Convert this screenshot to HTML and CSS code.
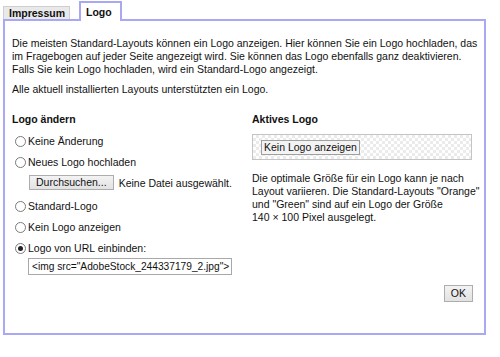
FILE: index.html
```html
<!DOCTYPE html>
<html lang="de">
<head>
  <meta charset="UTF-8">
  <title>Logo</title>
  <link rel="stylesheet" href="styles.css">
</head>
<body>
  <div class="dialog">
    <div class="tabs">
      <div class="tab">Impressum</div>
      <div class="tab active">Logo</div>
    </div>

    <div class="panel">
      <p class="intro">Die meisten Standard-Layouts können ein Logo anzeigen. Hier können Sie ein Logo hochladen, das<br>
        im Fragebogen auf jeder Seite angezeigt wird. Sie können das Logo ebenfalls ganz deaktivieren.<br>
        Falls Sie kein Logo hochladen, wird ein Standard-Logo angezeigt.</p>
      <p>Alle aktuell installierten Layouts unterstützten ein Logo.</p>

      <div class="cols">
        <div class="col-left">
          <h3>Logo ändern</h3>
          <label class="opt"><span class="radio"></span>Keine Änderung</label>
          <label class="opt"><span class="radio"></span>Neues Logo hochladen</label>
          <div class="file-row">
            <span class="btn">Durchsuchen...</span>
            <span>Keine Datei ausgewählt.</span>
          </div>
          <label class="opt"><span class="radio"></span>Standard-Logo</label>
          <label class="opt"><span class="radio"></span>Kein Logo anzeigen</label>
          <label class="opt"><span class="radio checked"></span>Logo von URL einbinden:</label>
          <div class="url-field">&lt;img src="AdobeStock_244337179_2.jpg"&gt;</div>
        </div>

        <div class="col-right">
          <h3>Aktives Logo</h3>
          <div class="preview">
            <span class="preview-btn">Kein Logo anzeigen</span>
          </div>
          <p class="hint">Die optimale Größe für ein Logo kann je nach Layout variieren. Die Standard-Layouts "Orange" und "Green" sind auf ein Logo der Größe <span class="nowrap">140 × 100 Pixel</span> ausgelegt.</p>
        </div>
      </div>

      <div class="actions">
        <span class="btn ok">OK</span>
      </div>
    </div>
  </div>
</body>
</html>
```

FILE: styles.css
```css
body {
  margin: 0;
  padding: 3px;
  font-family: "Liberation Sans", Arial, sans-serif;
  font-size: 10.5px;
  color: #111;
  background: #fff;
}

.dialog {
  width: 483px;
}

/* Reiter */
.tabs {
  display: flex;
  align-items: flex-end;
  gap: 9px;
  height: 16px;
  position: relative;
  z-index: 1;
}

.tab {
  font-weight: bold;
  padding: 0 6px 0 5px;
  height: 12px;
  line-height: 13px;
  width: 54px;
  background: #e9e9e9;
  border: 1px solid #cfcfcf;
  border-bottom: none;
}

.tab.active {
  width: auto;
  background: #fff;
  border: 2px solid #a8a8f4;
  border-bottom: none;
  height: 18px;
  line-height: 18px;
  padding: 0 8px 0 5px;
  margin-bottom: -2px;
}

.panel {
  border: 2px solid #a8a8f4;
  height: 316px;
  box-sizing: border-box;
  padding: 16px 8px 0 7px;
  display: flex;
  flex-direction: column;
}

.panel p {
  margin: 0 0 7px;
  line-height: 13px;
}

.panel .intro {
  white-space: nowrap;
}

.cols {
  display: flex;
  margin-top: 9px;
}

.col-left {
  width: 240px;
  flex-shrink: 0;
}

.col-right {
  width: 234px;
  flex-shrink: 0;
}

h3 {
  font-size: 10.5px;
  margin: 0 0 8px;
  line-height: 14px;
}

.opt {
  display: flex;
  align-items: center;
  height: 14px;
  margin-bottom: 7px;
}

.radio {
  width: 11px;
  height: 11px;
  border: 1px solid #7a7a7a;
  border-radius: 50%;
  margin: 0 2px 0 3px;
  box-sizing: border-box;
  background: #fff;
  position: relative;
}

.radio.checked::after {
  content: "";
  position: absolute;
  left: 2px;
  top: 2px;
  width: 5px;
  height: 5px;
  border-radius: 50%;
  background: #222;
}

.file-row {
  display: flex;
  align-items: center;
  gap: 5px;
  margin: -1px 0 9px 17px;
}

.btn {
  display: inline-block;
  border: 1px solid #adadad;
  background: linear-gradient(#f3f3f3, #e2e2e2);
  padding: 0 6px;
  height: 13px;
  line-height: 13px;
}

.url-field {
  margin: -4px 0 0 16px;
  width: 204px;
  height: 17px;
  box-sizing: border-box;
  border: 1px solid #a8a8a8;
  padding: 0 3px;
  font-size: 10.2px;
  line-height: 15px;
  white-space: nowrap;
  background: #fff;
}

.preview {
  width: 220px;
  box-sizing: border-box;
  border: 1px solid #c4c4c4;
  height: 26px;
  display: flex;
  align-items: center;
  padding-left: 8px;
  margin: 2px 0 12px;
  background: repeating-conic-gradient(#ebebeb 0 25%, #fff 0 50%) 0 0 / 6px 6px;
}

.preview-btn {
  border: 1px solid #a0a0a0;
  background: #f3f3f3;
  padding: 0 2px;
  height: 13px;
  line-height: 13px;
}

.panel .hint {
  margin: 0;
  line-height: 13px;
}

.nowrap {
  white-space: nowrap;
}

.actions {
  display: flex;
  justify-content: flex-end;
  margin-top: 10px;
  padding-right: 3px;
}

.ok {
  padding: 0 6px;
  height: 15px;
  line-height: 15px;
}
```
